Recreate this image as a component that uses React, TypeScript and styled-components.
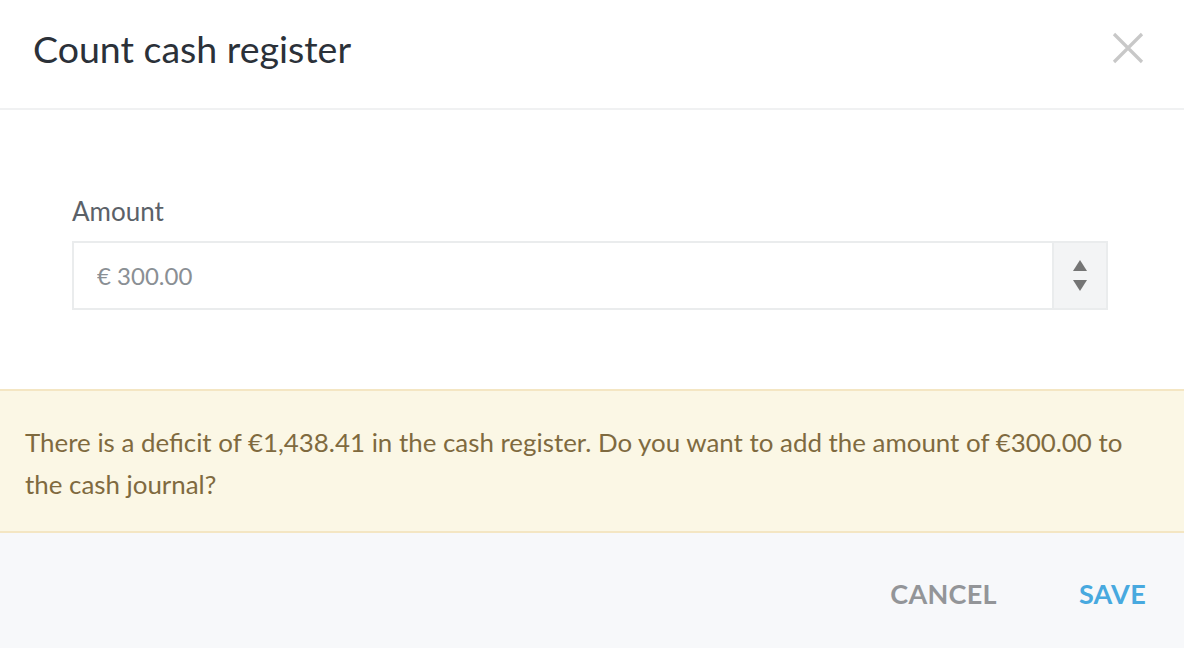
import React from "react";
import styled, { createGlobalStyle } from "styled-components";

const Global = createGlobalStyle`
  html, body { margin: 0; padding: 0; background: #ffffff; }
  body { font-family: Lato, "Open Sans", sans-serif; -webkit-font-smoothing: antialiased; }
  * { box-sizing: border-box; }
`;

const Dialog = styled.div`
  width: 1184px;
  height: 648px;
  display: flex;
  flex-direction: column;
  background: #ffffff;
  overflow: hidden;
`;

const Header = styled.header`
  height: 110px;
  flex: none;
  display: flex;
  align-items: center;
  justify-content: space-between;
  padding: 0 38px 12px 33px;
  border-bottom: 2px solid #f0f1f2;
`;

const Title = styled.h1`
  margin: 0;
  font-size: 37.5px;
  font-weight: 400;
  color: #2b3139;
  letter-spacing: 0;
`;

const CloseButton = styled.button`
  border: none;
  background: transparent;
  padding: 0;
  width: 36px;
  height: 36px;
  display: flex;
  align-items: center;
  justify-content: center;
  cursor: pointer;
`;

const Body = styled.section`
  flex: none;
  height: 279px;
  padding: 85px 76px 0 72px;
  display: flex;
  flex-direction: column;
`;

const Label = styled.label`
  font-size: 26px;
  color: #5b6168;
  margin-bottom: 14px;
  line-height: 32px;
`;

const InputRow = styled.div`
  height: 69px;
  display: flex;
  border: 2px solid #eaeced;
  background: #ffffff;
`;

const Input = styled.input`
  flex: 1;
  border: none;
  outline: none;
  padding: 0 0 0 23px;
  font-family: inherit;
  font-size: 24px;
  color: #8a8f94;
  background: transparent;
  &::placeholder { color: #8a8f94; }
`;

const Spinner = styled.div`
  width: 54px;
  flex: none;
  border-left: 2px solid #eaeced;
  background: #f3f4f5;
  display: flex;
  flex-direction: column;
  align-items: center;
  justify-content: center;
  gap: 9px;
`;

const Arrow = styled.div<{ $down?: boolean }>`
  width: 0;
  height: 0;
  border-left: 7px solid transparent;
  border-right: 7px solid transparent;
  ${(p) =>
    p.$down
      ? "border-top: 11px solid #757575;"
      : "border-bottom: 11px solid #757575;"}
`;

const Notice = styled.div`
  flex: none;
  height: 144px;
  background: #fbf7e5;
  border-top: 2px solid #f4e6c3;
  border-bottom: 2px solid #f4e6c3;
  padding: 30px 25px 0 25px;
  font-size: 25.9px;
  line-height: 42px;
  color: #7f6a3f;
`;

const Footer = styled.footer`
  flex: 1;
  background: #f7f8fa;
  display: flex;
  justify-content: flex-end;
  align-items: center;
  padding: 6px 38px 0 0;
  gap: 82px;
`;

const TextButton = styled.button<{ $primary?: boolean }>`
  border: none;
  background: transparent;
  padding: 0;
  font-family: inherit;
  font-weight: 700;
  font-size: 27px;
  letter-spacing: 0.3px;
  color: ${(p) => (p.$primary ? "#48a9df" : "#939598")};
  cursor: pointer;
`;

export default function App() {
  return (
    <>
      <Global />
      <Dialog>
        <Header>
          <Title>Count cash register</Title>
          <CloseButton aria-label="Close">
            <svg width="32" height="32" viewBox="0 0 32 32">
              <path d="M2 2 L30 30 M30 2 L2 30" stroke="#c8c8c8" strokeWidth="3.2" />
            </svg>
          </CloseButton>
        </Header>
        <Body>
          <Label>Amount</Label>
          <InputRow>
            <Input placeholder="€ 300.00" />
            <Spinner>
              <Arrow />
              <Arrow $down />
            </Spinner>
          </InputRow>
        </Body>
        <Notice>
          There is a deficit of €1,438.41 in the cash register. Do you want to add the amount of €300.00 to the cash journal?
        </Notice>
        <Footer>
          <TextButton>CANCEL</TextButton>
          <TextButton $primary>SAVE</TextButton>
        </Footer>
      </Dialog>
    </>
  );
}
